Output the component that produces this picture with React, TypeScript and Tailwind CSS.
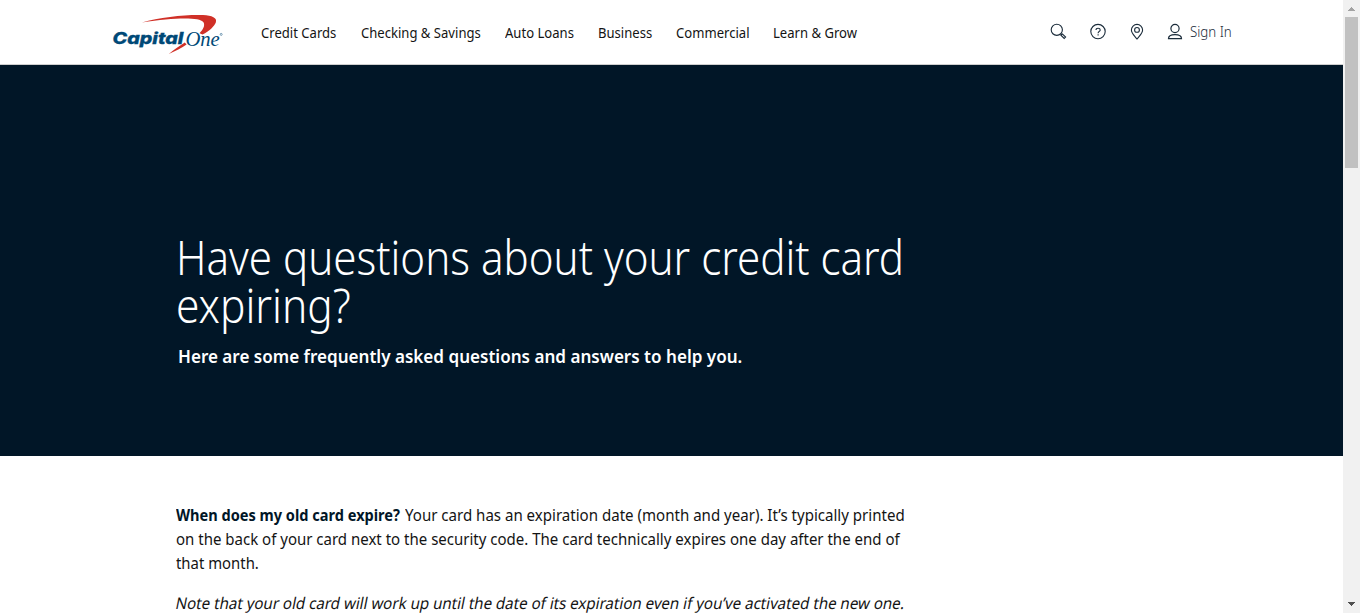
const NAV = [
  { label: "Credit Cards", width: "w-[75.3px]" },
  { label: "Checking & Savings", width: "w-[120px]" },
  { label: "Auto Loans", width: "w-[69.5px]" },
  { label: "Business", width: "w-[54.2px]" },
  { label: "Commercial", width: "w-[72.5px]" },
  { label: "Learn & Grow", width: "w-[84px]" },
];

function Logo() {
  return (
    <svg width="112" height="42" viewBox="112 13 112 42" aria-label="Capital One">
      <path
        fill="#d03027"
        d="M142 22.4 C160 17 188 14.4 203 15.1 C212 15.5 217.5 18 215.8 22.4 C214.2 26.6 209.5 30.5 202.5 34.6 L199.5 33.2 C203 29.6 205.5 25.6 203.3 22 C199.5 17.2 175 17.4 142 22.4 Z"
      />
      <path fill="#d03027" d="M184.8 42.6 C180 45.8 174 49.6 168.8 54 C175 51.2 182 47.6 186.6 44.4 Z" />
      <text
        x="112.6"
        y="43.8"
        textLength="70.8"
        lengthAdjust="spacingAndGlyphs"
        fill="#004977"
        stroke="#004977"
        strokeWidth="0.3"
        className="font-['Inter',sans-serif] text-[16px] font-extrabold italic"
      >
        Capital
      </text>
      <text
        x="185.4"
        y="46.4"
        textLength="34.4"
        lengthAdjust="spacingAndGlyphs"
        fill="#004977"
        className="font-['Liberation_Serif',serif] text-[22px] italic"
      >
        One
      </text>
      <circle cx="221.2" cy="34.4" r="1" fill="none" stroke="#004977" strokeWidth="0.5" />
    </svg>
  );
}

function SearchIcon() {
  return (
    <svg width="18" height="18" viewBox="1050 23 18 18" fill="none" stroke="#1b2c3b" strokeWidth="1.1">
      <circle cx="1056.8" cy="29.8" r="5.6" />
      <path d="M1060.8 33.8 l1.3 1.2 M1062.3 33.9 l3.3 3.2 -1.4 1.4 -3.3 -3.3 Z" />
    </svg>
  );
}

function HelpIcon() {
  return (
    <svg width="18" height="18" viewBox="0 0 18 18" fill="none" stroke="#1b2c3b" strokeWidth="1.1">
      <circle cx="9" cy="8.6" r="7.2" />
      <path d="M7 6.9 C7 4.7 11.2 4.7 11.2 6.9 C11.2 8.3 9.1 8.4 9.1 10.2" />
      <path d="M9.1 11.3 v1.3" />
    </svg>
  );
}

function PinIcon() {
  return (
    <svg width="14" height="18" viewBox="0 0 14 18" fill="none" stroke="#1b2c3b" strokeWidth="1.1">
      <path d="M7 16 C4.6 12.8 1.4 10.4 1.4 7 A5.6 5.6 0 0 1 12.6 7 C12.6 10.4 9.4 12.8 7 16 Z" />
      <circle cx="7" cy="6.9" r="2.4" />
    </svg>
  );
}

function PersonIcon() {
  return (
    <svg width="16" height="18" viewBox="0 0 16 18" fill="none" stroke="#1b2c3b" strokeWidth="1.2">
      <circle cx="8" cy="5.5" r="4.1" />
      <path d="M1.5 15.6 C1.5 10.2 14.5 10.2 14.5 15.6 Z" />
    </svg>
  );
}

function Header() {
  return (
    <header className="flex h-[65px] border-b border-[#cfcfcf] bg-white pl-28">
      <div className="pt-[13px]">
        <Logo />
      </div>
      <nav className="ml-[37.4px] flex gap-[24px] pt-[23px] text-sm leading-5 text-[#141414]">
        {NAV.map((item) => (
          <a key={item.label} className={item.width}>
            <span className="inline-block origin-left scale-x-[0.934] whitespace-nowrap">{item.label}</span>
          </a>
        ))}
      </nav>
      <div className="mr-[111px] ml-auto flex pt-[23px]">
        <SearchIcon />
        <div className="ml-[21px]">
          <HelpIcon />
        </div>
        <div className="ml-[22.5px]">
          <PinIcon />
        </div>
        <div className="ml-[23px]">
          <PersonIcon />
        </div>
        <a className="-mt-px ml-[7.5px] w-[42px] text-sm leading-5 font-light text-[#1b2c3b]">
          <span className="inline-block origin-left scale-x-[0.95] whitespace-nowrap">Sign In</span>
        </a>
      </div>
    </header>
  );
}

function Hero() {
  return (
    <section className="flex h-[391px] flex-col bg-[#011627] pt-[168px] text-white">
      <h1 className="pl-[175.5px] text-5xl leading-[48px] font-light whitespace-nowrap">
        <span className="block w-fit origin-left scale-x-[0.877]">Have questions about your credit card</span>
        <span className="block w-fit origin-left scale-x-[0.885]">expiring?</span>
      </h1>
      <p className="mt-[15px] ml-[178px] w-fit origin-left scale-x-[0.948] text-lg leading-6 font-semibold whitespace-nowrap">
        Here are some frequently asked questions and answers to help you.
      </p>
    </section>
  );
}

function Article() {
  return (
    <article className="flex flex-col gap-4 pt-[47px] pl-[175.5px] text-base leading-6 whitespace-nowrap text-[#141414]">
      <div>
        <div className="flex">
          <div className="w-[229px]">
            <strong className="inline-block origin-left scale-x-[0.91] font-bold text-[#011627]">
              When does my old card expire?
            </strong>
          </div>
          <span className="origin-left scale-x-[0.941]">
            Your card has an expiration date (month and year). It’s typically printed
          </span>
        </div>
        <div className="w-fit origin-left scale-x-[0.938]">
          on the back of your card next to the security code. The card technically expires one day after the end of
        </div>
        <div className="w-fit origin-left scale-x-[0.93]">that month.</div>
      </div>
      <p className="w-fit origin-left -skew-x-12 scale-x-[0.942]">
        Note that your old card will work up until the date of its expiration even if you’ve activated the new one.
      </p>
    </article>
  );
}

function Scrollbar() {
  return (
    <div className="flex h-full w-[17px] shrink-0 flex-col items-center bg-[#f1f1f1]">
      <svg width="17" height="17" viewBox="0 0 17 17" shapeRendering="crispEdges">
        <path d="M8 7h1v1h1v1h1v1h1v1H5v-1h1V9h1V8h1z" fill="#a3a3a3" />
      </svg>
      <div className="h-[151px] w-[13px] bg-[#c1c1c1]" />
      <svg className="mt-auto" width="17" height="17" viewBox="0 0 17 17" shapeRendering="crispEdges">
        <path d="M5 6h7v1h-1v1h-1v1H9v1H8V9H7V8H6V7H5z" fill="#505050" />
      </svg>
    </div>
  );
}

export default function App() {
  return (
    <div className="flex h-[613px] w-[1360px] overflow-hidden bg-white font-['Noto_Sans',sans-serif]">
      <main className="h-full w-[1343px] overflow-hidden">
        <Header />
        <Hero />
        <Article />
      </main>
      <Scrollbar />
    </div>
  );
}
